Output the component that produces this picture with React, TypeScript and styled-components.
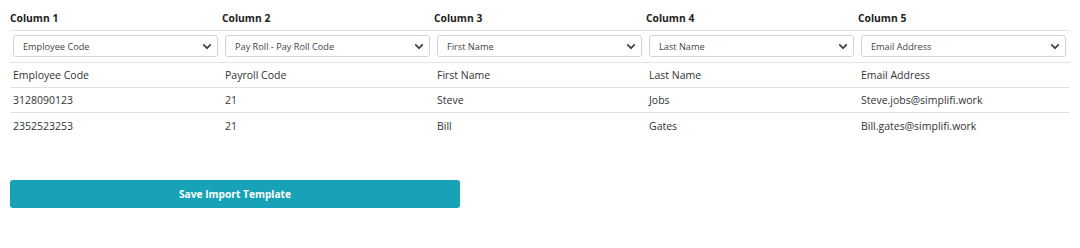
import styled, { createGlobalStyle } from "styled-components";

const GlobalStyle = createGlobalStyle`
  body {
    margin: 0;
    background: #fff;
    font-family: "Open Sans", "Liberation Sans", sans-serif;
    color: #333;
  }
`;

const columns = ["Column 1", "Column 2", "Column 3", "Column 4", "Column 5"];
const mappings = [
  "Employee Code",
  "Pay Roll - Pay Roll Code",
  "First Name",
  "Last Name",
  "Email Address",
];
const rows = [
  ["Employee Code", "Payroll Code", "First Name", "Last Name", "Email Address"],
  ["3128090123", "21", "Steve", "Jobs", "Steve.jobs@simplifi.work"],
  ["2352523253", "21", "Bill", "Gates", "Bill.gates@simplifi.work"],
];

const App = () => {
  return (
    <>
      <GlobalStyle />
      <Page>
        <Table>
          <HeaderRow>
            {columns.map((c) => (
              <HeaderCell key={c}>{c}</HeaderCell>
            ))}
          </HeaderRow>
          <SelectRow>
            {mappings.map((m) => (
              <SelectCell key={m}>
                <SelectBox defaultValue={m}>
                  <option>{m}</option>
                </SelectBox>
                <Chevron viewBox="0 0 12 8">
                  <path
                    d="M1.5 1.5 L6 6 L10.5 1.5"
                    fill="none"
                    stroke="#444"
                    strokeWidth="2.2"
                  />
                </Chevron>
              </SelectCell>
            ))}
          </SelectRow>
          {rows.map((r, i) => (
            <DataRow key={i} last={i === rows.length - 1}>
              {r.map((v, j) => (
                <DataCell key={j}>{v}</DataCell>
              ))}
            </DataRow>
          ))}
        </Table>
        <SaveButton>Save Import Template</SaveButton>
      </Page>
    </>
  );
};

export default App;

const Page = styled.div`
  padding: 4px 10px 0 10px;
  width: 1060px;
`;

const Table = styled.div`
  display: flex;
  flex-direction: column;
`;

const Row = styled.div`
  display: grid;
  grid-template-columns: repeat(5, 1fr);
`;

const HeaderRow = styled(Row)`
  height: 26px;
  border-bottom: 1px solid #dee2e6;
  align-items: center;
`;

const HeaderCell = styled.div`
  font-size: 10.3px;
  font-weight: 700;
  color: #222;
  padding-top: 1px;
`;

const SelectRow = styled(Row)`
  padding: 4px 0 5px;
  border-bottom: 1px solid #dee2e6;
`;

const SelectCell = styled.div`
  position: relative;
  padding: 0 4px 0 3px;
  height: 22px;
`;

const SelectBox = styled.select`
  appearance: none;
  display: block;
  width: 100%;
  height: 22px;
  box-sizing: border-box;
  border: 1px solid #ced4da;
  border-radius: 3px;
  background: #fff;
  font-family: "Open Sans", "Liberation Sans", sans-serif;
  font-size: 9.2px;
  color: #444;
  padding: 0 20px 0 9px;
  outline: none;
`;

const Chevron = styled.svg`
  position: absolute;
  right: 10px;
  top: 8px;
  width: 10px;
  height: 7px;
  pointer-events: none;
`;

const DataRow = styled(Row).withConfig({
  shouldForwardProp: (prop) => prop !== "last",
})<{ last?: boolean }>`
  height: ${({ last }) => (last ? "26px" : "24px")};
  align-items: center;
  border-bottom: ${({ last }) => (last ? "none" : "1px solid #dee2e6")};
`;

const DataCell = styled.div`
  font-size: 10.5px;
  color: #333;
  padding-left: 3px;
`;

const SaveButton = styled.button`
  display: block;
  margin-top: 41px;
  width: 450px;
  height: 28px;
  border: none;
  border-radius: 3px;
  background: #17a2b8;
  color: #fff;
  font-family: "Open Sans", "Liberation Sans", sans-serif;
  font-size: 10.2px;
  font-weight: 700;
  cursor: pointer;
`;
